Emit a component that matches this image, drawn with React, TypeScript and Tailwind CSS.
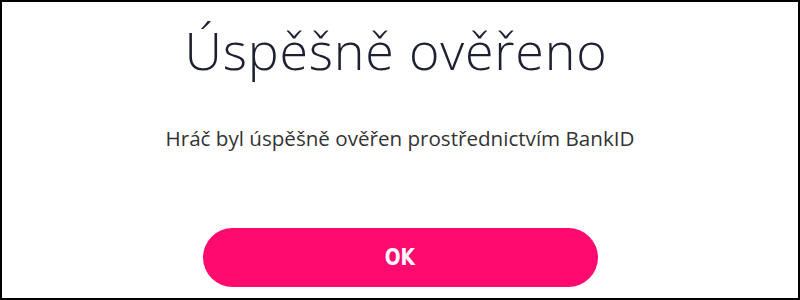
export default function App() {
  return (
    <main className="flex h-[300px] w-[800px] flex-col items-center border-2 border-black bg-white">
      <h1 className="mr-[8px] mt-[22px] text-[52px] font-light leading-none tracking-[0.8px] text-[#1e1f30] [font-family:'Open_Sans',sans-serif]">
        Úspěšně ověřeno
      </h1>
      <p className="mt-[52px] text-[20.6px] leading-none text-[#333333] [font-family:'Open_Sans',sans-serif]">
        Hráč byl úspěšně ověřen prostřednictvím BankID
      </p>
      <button
        type="button"
        className="mt-[79px] flex h-[59px] w-[395px] items-center justify-center rounded-full bg-[#ff0a6e] text-[23px] font-bold text-white [font-family:'DejaVu_Sans_Condensed','DejaVu_Sans',sans-serif]"
      >
        <span className="inline-block scale-x-90">OK</span>
      </button>
    </main>
  );
}
